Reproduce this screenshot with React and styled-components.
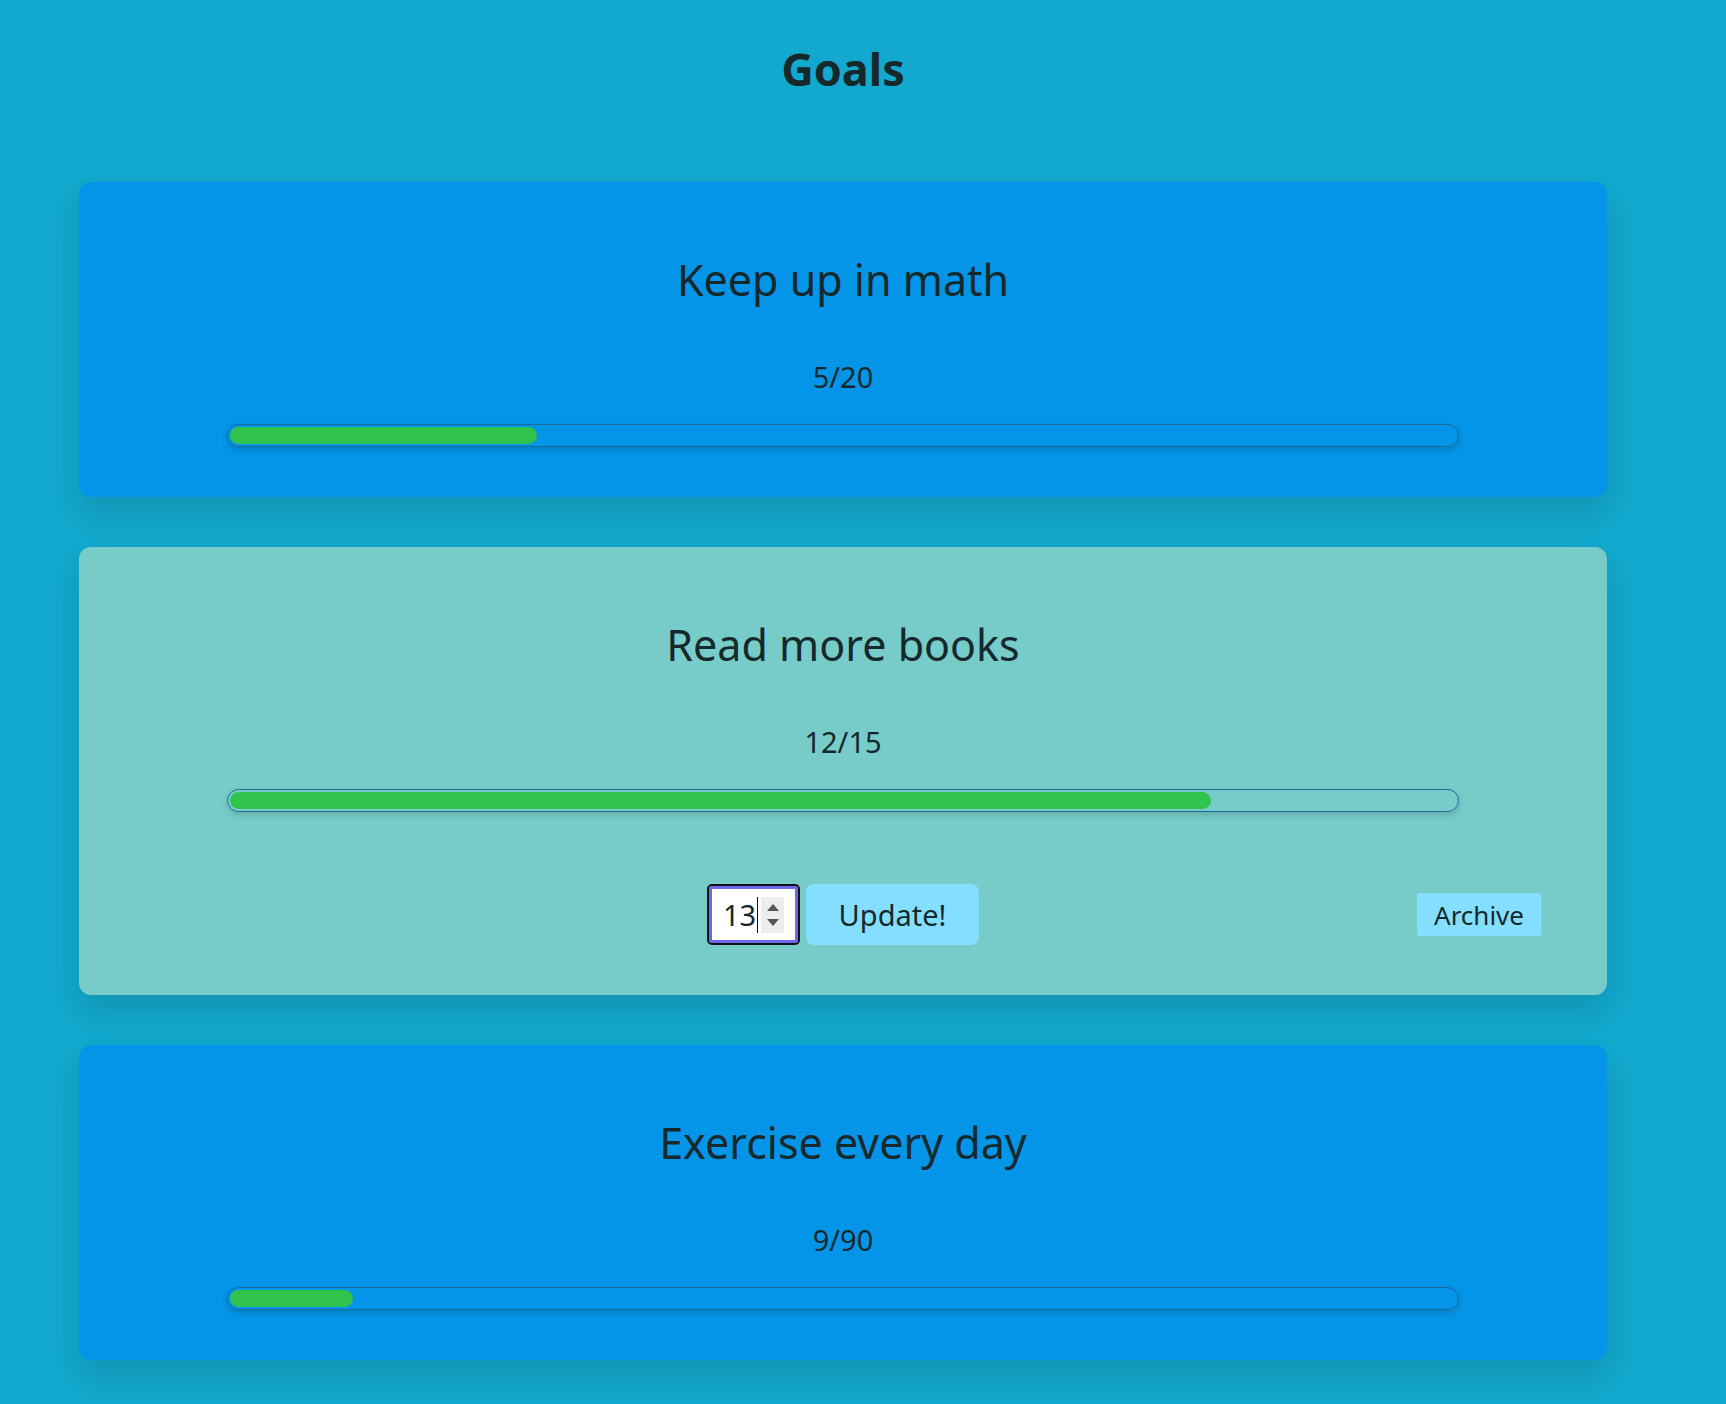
import React from "react";
import styled, { createGlobalStyle } from "styled-components";

const GlobalStyle = createGlobalStyle`
  html, body {
    margin: 0;
    padding: 0;
    background-color: #13a8cd;
    font-family: "Noto Sans", "Open Sans", sans-serif;
    color: #15292c;
  }
`;

const Page = styled.div`
  min-height: 1404px;
  box-sizing: border-box;
  padding: 41px 119px 40px 79px;
`;

const Heading = styled.h1`
  margin: 0 0 86px;
  font-size: 45px;
  line-height: 55px;
  font-weight: 700;
  text-align: center;
`;

const List = styled.div`
  display: flex;
  flex-direction: column;
  gap: 50px;
`;

const Card = styled.div`
  padding: 71px 148px 50px;
  border-radius: 12px;
  background-color: ${(props) => (props.active ? "#77cbc9" : "#0495e8")};
  box-shadow: 0 16px 32px rgba(0, 0, 0, 0.12);
  text-align: center;
`;

const Title = styled.h2`
  margin: 0;
  font-size: 43px;
  line-height: 54px;
  font-weight: 400;
`;

const Count = styled.div`
  margin-top: 52px;
  font-size: 29px;
  line-height: 36px;
`;

const Bar = styled.div`
  margin-top: 29px;
  height: 23px;
  box-sizing: border-box;
  padding: 2px;
  border: 1px solid #1a6a96;
  border-radius: 12px;
  box-shadow: 0 3px 6px rgba(0, 0, 0, 0.15);
`;

const Fill = styled.div`
  height: 100%;
  border-radius: 10px;
  background-color: #31c34b;
`;

const Controls = styled.div`
  margin: 72px -82px 0;
  display: grid;
  grid-template-columns: 1fr auto 1fr;
  align-items: center;
`;

const UpdateForm = styled.div`
  grid-column: 2;
  display: flex;
  gap: 6px;
`;

const NumberBox = styled.div`
  width: 93px;
  height: 61px;
  box-sizing: border-box;
  display: flex;
  align-items: center;
  padding: 0 14px 0 14px;
  border: 2px solid #111;
  border-radius: 5px;
  background: #fff;
  box-shadow: inset 0 0 0 3px #6a68ec;
`;

const Value = styled.span`
  font-size: 29px;
  line-height: 36px;
  padding-right: 1px;
  border-right: 1.5px solid #111;
`;

const Spinner = styled.div`
  margin-left: auto;
  width: 23px;
  height: 36px;
  background: #ededed;
  display: flex;
  flex-direction: column;
  align-items: center;
  justify-content: center;
  gap: 8px;
`;

const Arrow = styled.span`
  width: 0;
  height: 0;
  border-left: 6.5px solid transparent;
  border-right: 6.5px solid transparent;
  ${(props) =>
    props.up
      ? "border-bottom: 7px solid #555;"
      : "border-top: 7px solid #555;"}
`;

const UpdateButton = styled.button`
  width: 173px;
  height: 61px;
  border: none;
  border-radius: 8px;
  background-color: #84dffe;
  color: #15292c;
  font-family: inherit;
  font-size: 29px;
  cursor: pointer;
`;

const ArchiveButton = styled.button`
  grid-column: 3;
  justify-self: end;
  width: 124px;
  height: 43px;
  border: none;
  border-radius: 3px;
  background-color: #84dffe;
  color: #15292c;
  font-family: inherit;
  font-size: 26px;
  padding: 0;
  cursor: pointer;
`;

const goals = [
  { title: "Keep up in math", done: 5, total: 20 },
  { title: "Read more books", done: 12, total: 15, active: true },
  { title: "Exercise every day", done: 9, total: 90 },
];

const Goal = ({ goal }) => (
  <Card active={goal.active}>
    <Title>{goal.title}</Title>
    <Count>
      {goal.done}/{goal.total}
    </Count>
    <Bar>
      <Fill style={{ width: `${(goal.done / goal.total) * 100}%` }} />
    </Bar>
    {goal.active && (
      <Controls>
        <UpdateForm>
          <NumberBox>
            <Value>{goal.done + 1}</Value>
            <Spinner>
              <Arrow up />
              <Arrow />
            </Spinner>
          </NumberBox>
          <UpdateButton>Update!</UpdateButton>
        </UpdateForm>
        <ArchiveButton>Archive</ArchiveButton>
      </Controls>
    )}
  </Card>
);

const App = () => (
  <Page>
    <GlobalStyle />
    <Heading>Goals</Heading>
    <List>
      {goals.map((goal) => (
        <Goal key={goal.title} goal={goal} />
      ))}
    </List>
  </Page>
);

export default App;
